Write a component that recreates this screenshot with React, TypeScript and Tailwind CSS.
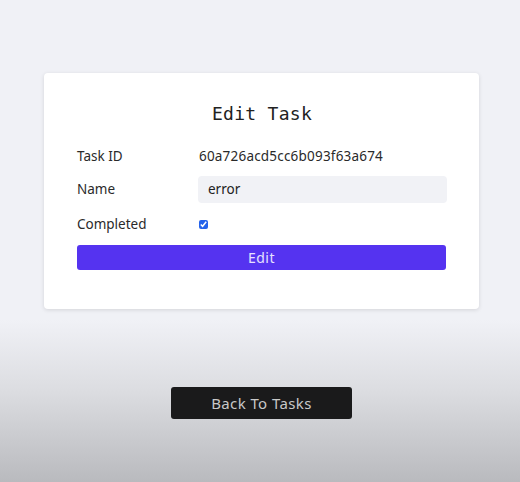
import React from "react";

export default function App() {
  return (
    <div
      className="w-[520px] h-[482px] flex flex-col"
      style={{ fontFamily: "'Noto Sans', 'Open Sans', sans-serif" }}
    >
      <div className="w-full h-[482px] bg-[linear-gradient(to_bottom,#f0f1f6_0px,#f0f1f6_320px,#dcdde1_390px,#b9babe_482px)] flex flex-col">
        <div className="mt-[73px] ml-[44px] w-[435px] h-[236px] bg-white rounded-[4px] shadow-[0_1px_4px_rgba(0,0,0,0.12)] pl-[33px] pr-[32px] pt-[27px]">
          <h1
            className="text-center text-[18px] leading-[28px] text-[#222] tracking-[0.3px]"
            style={{ fontFamily: "'DejaVu Sans Mono', monospace" }}
          >
            Edit Task
          </h1>
          <div className="mt-[16px] flex items-center h-[24px] text-[13.5px] text-[#2a2a2a]">
            <div className="w-[122px]">Task ID</div>
            <div className="tracking-[0.2px]">60a726acd5cc6b093f63a674</div>
          </div>
          <div className="mt-[8px] flex items-center h-[27px] text-[13.5px] text-[#2a2a2a]">
            <div className="w-[121px]">Name</div>
            <div className="w-[249px] h-[27px] bg-[#f1f2f6] rounded-[4px] flex items-center px-[10px] text-[#222]">
              error
            </div>
          </div>
          <div className="mt-[8px] flex items-center h-[26px] text-[13.5px] text-[#2a2a2a]">
            <div className="w-[122px]">Completed</div>
            <input type="checkbox" defaultChecked className="w-[9px] h-[9px] m-0 accent-[#2563eb]" />
          </div>
          <button className="mt-[8px] w-[369px] h-[25px] bg-[#5533f0] rounded-[3px] text-[#e6e1ff] text-[14px] tracking-[0.5px] flex items-center justify-center">
            Edit
          </button>
        </div>
        <button className="mt-[78px] ml-[171px] w-[181px] h-[32px] bg-[#1a1a1b] rounded-[3px] text-[#c8c8c8] text-[15px] tracking-[0.4px] flex items-center justify-center">
          Back To Tasks
        </button>
      </div>
    </div>
  );
}
